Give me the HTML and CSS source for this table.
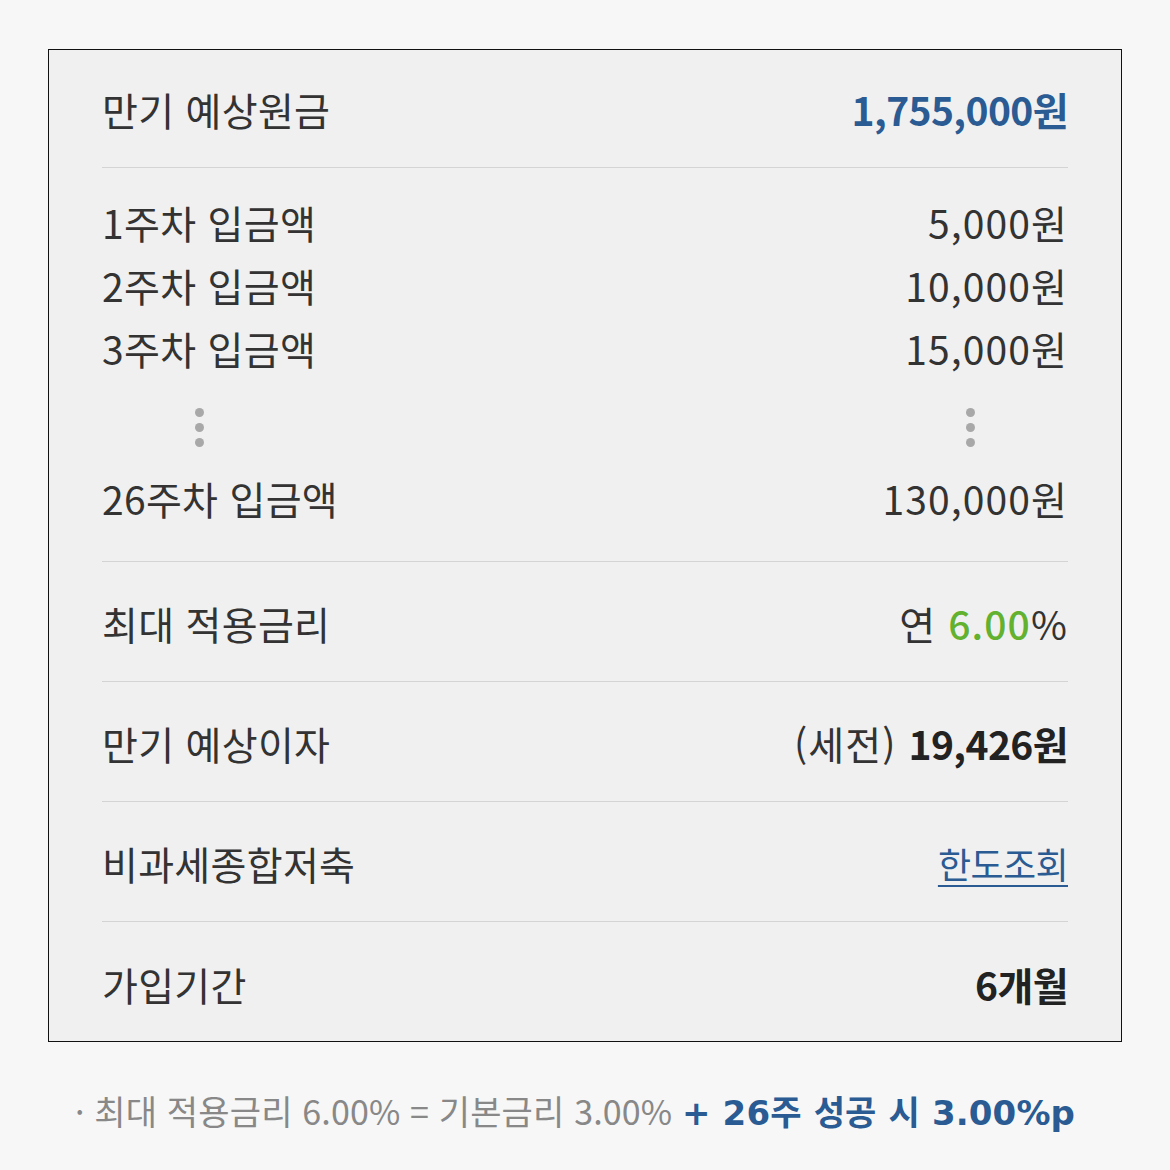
FILE: index.html
```html
<!DOCTYPE html>
<html lang="ko">
<head>
<meta charset="utf-8">
<link rel="stylesheet" href="styles.css">
</head>
<body>
<div class="page">
  <div class="card">
    <div class="row first">
      <span class="label">만기 예상원금</span>
      <span class="value blue bold">1,755,000원</span>
    </div>
    <div class="weeks">
      <div class="line"><span class="label">1주차 입금액</span><span class="value">5,000원</span></div>
      <div class="line"><span class="label">2주차 입금액</span><span class="value">10,000원</span></div>
      <div class="line"><span class="label">3주차 입금액</span><span class="value">15,000원</span></div>
      <div class="dots-line">
        <span class="dots left"><i></i><i></i><i></i></span>
        <span class="dots right"><i></i><i></i><i></i></span>
      </div>
      <div class="line"><span class="label">26주차 입금액</span><span class="value">130,000원</span></div>
    </div>
    <div class="row">
      <span class="label">최대 적용금리</span>
      <span class="value">연 <span class="green">6.00</span>%</span>
    </div>
    <div class="row">
      <span class="label">만기 예상이자</span>
      <span class="value">(세전) <span class="bold dark">19,426원</span></span>
    </div>
    <div class="row">
      <span class="label">비과세종합저축</span>
      <a class="value link" href="#">한도조회</a>
    </div>
    <div class="row last">
      <span class="label">가입기간</span>
      <span class="value bold dark">6개월</span>
    </div>
  </div>
  <p class="note">· 최대 적용금리 6.00% = 기본금리 3.00% <strong class="note-strong">+ 26주 성공 시 3.00%p</strong></p>
</div>
</body>
</html>
```

FILE: styles.css
```css
* { box-sizing: border-box; }
html, body {
  margin: 0;
  padding: 0;
  background: #f7f7f7;
}
body {
  font-family: "Noto Sans CJK KR", "Noto Sans", sans-serif;
  color: #333;
}
.page {
  width: 1170px;
  height: 1170px;
  padding: 49px 48px 0 48px;
}
.card {
  width: 1074px;
  height: 993px;
  border: 1px solid #111;
  background: #f0f0f0;
  padding: 0 53px;
}
.row {
  display: flex;
  justify-content: space-between;
  align-items: center;
  height: 120px;
  border-bottom: 1px solid #d4d4d4;
  font-size: 39px;
  padding-top: 2px;
}
.row.first {
  height: 118px;
  padding-top: 0;
}
.row.last {
  border-bottom: none;
  height: 121px;
}
.weeks {
  border-bottom: 1px solid #d4d4d4;
  padding: 22px 0 32px;
  font-size: 39px;
}
.line {
  display: flex;
  justify-content: space-between;
  align-items: center;
  height: 63px;
}
.label { color: #333; letter-spacing: 0.3px; }
.value { color: #333; letter-spacing: 1.1px; }
.dots-line {
  height: 87px;
  position: relative;
}
.dots {
  position: absolute;
  top: 29px;
  display: flex;
  flex-direction: column;
  gap: 6px;
}
.dots.left { left: 93px; }
.dots.right { left: 864px; }
.dots i {
  display: block;
  width: 9px;
  height: 9px;
  border-radius: 50%;
  background: #a8a8a8;
}
.value.bold, .bold { font-weight: 700; letter-spacing: -0.6px; }
.blue { color: #2a5b93; }
.dark { color: #222; }
.green { color: #62b12f; font-weight: 500; }
.link {
  font-size: 36px;
  letter-spacing: -0.6px;
  color: #2a5b93;
  text-decoration: underline;
  text-underline-offset: 6px;
  text-decoration-thickness: 2px;
}
.note {
  margin: 44px 0 0 0;
  padding-left: 27px;
  font-size: 34px;
  color: #888;
  white-space: nowrap;
  letter-spacing: 0.15px;
}
.note-strong {
  font-family: "DejaVu Sans", "Noto Sans CJK KR", sans-serif;
  font-weight: 700;
  color: #2a5b93;
}
```
